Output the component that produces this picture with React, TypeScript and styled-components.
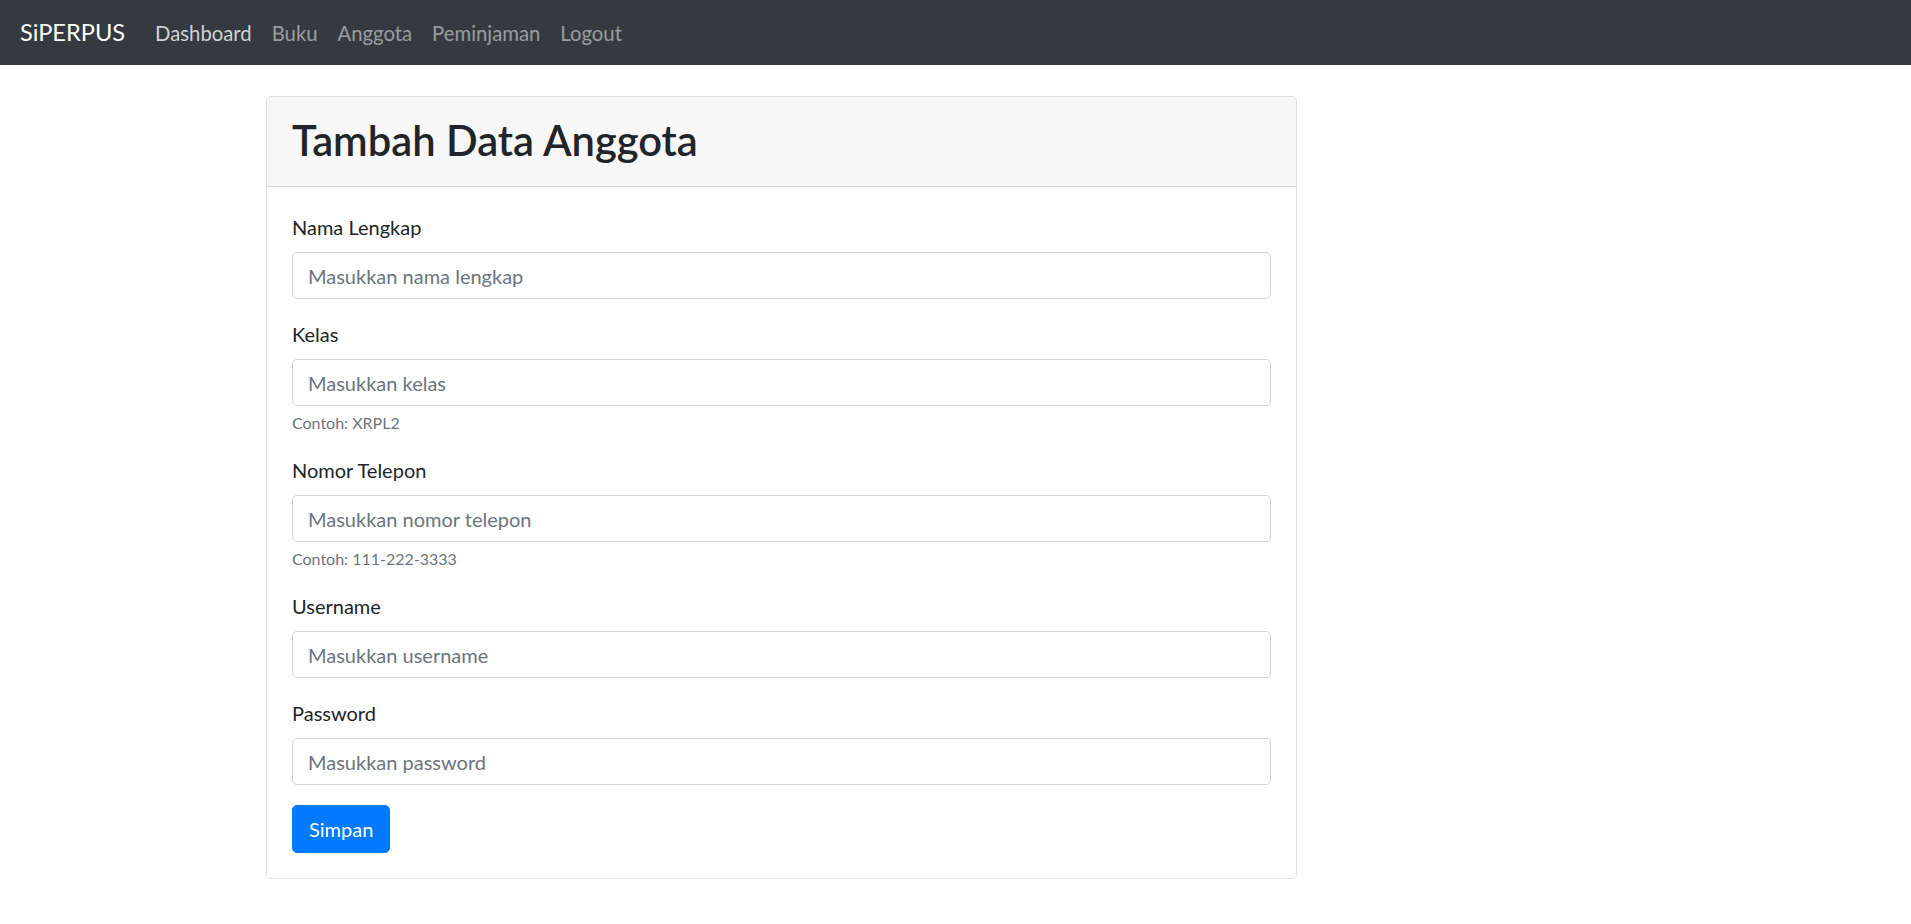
import React from "react";
import styled, { createGlobalStyle } from "styled-components";

const Global = createGlobalStyle`
  * { box-sizing: border-box; }
  html, body { margin: 0; padding: 0; background: #fff; }
  body {
    font-family: Lato, "Liberation Sans", sans-serif;
    font-size: 20px;
    line-height: 1.5;
    color: #212529;
  }
`;

const Navbar = styled.nav`
  height: 65px;
  background: #343a40;
  display: flex;
  align-items: center;
  padding: 0 20px;
`;

const Brand = styled.a`
  font-size: 23.6px;
  line-height: 37px;
  color: #fff;
  margin-right: 20px;
  text-decoration: none;
`;

const NavList = styled.ul`
  display: flex;
  list-style: none;
  margin: 0;
  padding: 0;
`;

const NavLink = styled.a<{ $active?: boolean }>`
  display: block;
  padding: 10px;
  line-height: 30px;
  font-size: 20.3px;
  text-decoration: none;
  color: ${(p) => (p.$active ? "rgba(255,255,255,0.78)" : "rgba(255,255,255,0.5)")};
`;

const Main = styled.main`
  padding: 31px 0 40px 266px;
`;

const Card = styled.div`
  width: 1031px;
  border: 1px solid rgba(0, 0, 0, 0.125);
  border-radius: 5px;
  background: #fff;
`;

const CardHeader = styled.div`
  background: rgba(0, 0, 0, 0.03);
  border-bottom: 1px solid rgba(0, 0, 0, 0.125);
  padding: 14px 25px 16px;
  border-radius: 5px 5px 0 0;
`;

const Title = styled.h1`
  margin: 0;
  font-size: 41.7px;
  font-weight: 600;
  line-height: 59px;
`;

const CardBody = styled.form`
  padding: 25px;
`;

const Group = styled.div`
  margin-bottom: 20px;
`;

const Label = styled.label`
  display: block;
  margin-bottom: 10px;
  line-height: 30px;
`;

const Input = styled.input`
  display: block;
  width: 100%;
  height: 47px;
  padding: 7px 15px;
  font: inherit;
  font-size: 20px;
  color: #495057;
  background: #fff;
  border: 1px solid #ced4da;
  border-radius: 5px;
  outline: none;
  &::placeholder {
    color: #6c757d;
    opacity: 1;
  }
`;

const Help = styled.small`
  display: block;
  margin-top: 5px;
  font-size: 16px;
  line-height: 24px;
  color: #6c757d;
`;

const Button = styled.button`
  font: inherit;
  font-size: 20px;
  line-height: 30px;
  padding: 8px 16px;
  color: #fff;
  background: #007bff;
  border: 1px solid #007bff;
  border-radius: 5px;
  cursor: pointer;
`;

const fields = [
  { label: "Nama Lengkap", ph: "Masukkan nama lengkap" },
  { label: "Kelas", ph: "Masukkan kelas", help: "Contoh: XRPL2" },
  { label: "Nomor Telepon", ph: "Masukkan nomor telepon", help: "Contoh: 111-222-3333" },
  { label: "Username", ph: "Masukkan username" },
  { label: "Password", ph: "Masukkan password", type: "password" },
];

export default function App() {
  return (
    <>
      <Global />
      <Navbar>
        <Brand href="#">SiPERPUS</Brand>
        <NavList>
          <li><NavLink href="#" $active>Dashboard</NavLink></li>
          <li><NavLink href="#">Buku</NavLink></li>
          <li><NavLink href="#">Anggota</NavLink></li>
          <li><NavLink href="#">Peminjaman</NavLink></li>
          <li><NavLink href="#">Logout</NavLink></li>
        </NavList>
      </Navbar>
      <Main>
        <Card>
          <CardHeader>
            <Title>Tambah Data Anggota</Title>
          </CardHeader>
          <CardBody onSubmit={(e) => e.preventDefault()}>
            {fields.map((f) => (
              <Group key={f.label}>
                <Label>{f.label}</Label>
                <Input type={f.type || "text"} placeholder={f.ph} />
                {f.help && <Help>{f.help}</Help>}
              </Group>
            ))}
            <Button type="submit">Simpan</Button>
          </CardBody>
        </Card>
      </Main>
    </>
  );
}
